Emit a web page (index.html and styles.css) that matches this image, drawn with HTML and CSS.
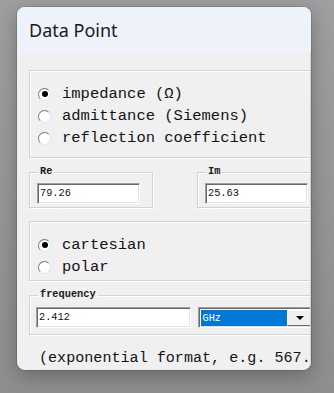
FILE: index.html
```html
<!DOCTYPE html>
<html>
<head>
<meta charset="utf-8">
<link rel="stylesheet" href="styles.css">
</head>
<body>
<div class="window">
  <div class="titlebar">Data Point</div>
  <div class="content">
    <div class="group group-type">
      <div class="radio-row"><span class="radio checked"></span><span>impedance (Ω)</span></div>
      <div class="radio-row"><span class="radio"></span><span>admittance (Siemens)</span></div>
      <div class="radio-row"><span class="radio"></span><span>reflection coefficient</span></div>
    </div>
    <div class="pair">
      <div class="group group-val">
        <span class="legend">Re</span>
        <div class="field">79.26</div>
      </div>
      <div class="group group-val group-im">
        <span class="legend">Im</span>
        <div class="field">25.63</div>
      </div>
    </div>
    <div class="group group-coord">
      <div class="radio-row"><span class="radio checked"></span><span>cartesian</span></div>
      <div class="radio-row"><span class="radio"></span><span>polar</span></div>
    </div>
    <div class="group group-freq">
      <span class="legend">frequency</span>
      <div class="freq-row">
        <div class="field field-freq">2.412</div>
        <div class="select">
          <span class="select-value">GHz</span>
          <span class="select-btn"><span class="arrow"></span></span>
        </div>
      </div>
    </div>
    <div class="hint">(exponential format, e.g. 567.</div>
  </div>
</div>
</body>
</html>
```

FILE: styles.css
```css
html, body {
  margin: 0;
  padding: 0;
}
body {
  width: 334px;
  height: 393px;
  overflow: hidden;
  background: linear-gradient(#9f9f9f, #8e8e8e);
  padding: 7px 0 0 17px;
  box-sizing: border-box;
}
.window {
  width: 294px;
  height: 363px;
  border-radius: 8px;
  overflow: hidden;
  background: #f0f0f0;
  box-shadow: 0 0 0 1px rgba(0,0,0,0.12), 0 6px 20px rgba(0,0,0,0.28);
  display: flex;
  flex-direction: column;
}
.titlebar {
  height: 45px;
  flex: none;
  background: #eef2fb;
  padding-left: 12px;
  display: flex;
  align-items: center;
  font-family: "Noto Sans", sans-serif;
  font-size: 18px;
  color: #1a1a1a;
}
.content {
  flex: 1;
  padding: 18px 0 0 12px;
  border-right: 1px solid #d2d2d2;
  overflow: hidden;
  font-family: "Liberation Mono", monospace;
  color: #141414;
}
.group {
  position: relative;
  box-sizing: border-box;
  border: 1px solid #d3d3d3;
  box-shadow: inset 1px 1px 0 #ffffff, 1px 1px 0 #ffffff;
}
.legend {
  position: absolute;
  left: 8px;
  top: -8px;
  padding: 0 2px;
  background: #f0f0f0;
  font-family: "Liberation Mono", monospace;
  font-size: 10.3px;
  font-weight: bold;
  line-height: 12px;
  color: #1a1a1a;
}
.group-type {
  width: 300px;
  height: 88px;
  padding: 12px 0 0 8px;
}
.radio-row {
  height: 22px;
  display: flex;
  align-items: center;
  font-size: 15.5px;
}
.radio {
  box-sizing: border-box;
  width: 13px;
  height: 13px;
  border-radius: 50%;
  border: 1px solid;
  border-color: #7a7a7a #e4e4e4 #e4e4e4 #7a7a7a;
  background: #ffffff;
  margin-right: 11px;
  display: flex;
  align-items: center;
  justify-content: center;
  flex: none;
}
.radio.checked::after {
  content: "";
  width: 6px;
  height: 6px;
  border-radius: 50%;
  background: #000;
}
.pair {
  display: flex;
  margin-top: 14px;
}
.group-val {
  width: 124px;
  height: 36px;
  flex: none;
  padding: 10px 0 0 7px;
}
.group-im {
  margin-left: 44px;
}
.field {
  box-sizing: border-box;
  width: 103px;
  height: 21px;
  background: #ffffff;
  border: 1px solid;
  border-color: #a0a0a0 #ffffff #ffffff #a0a0a0;
  box-shadow: inset 1px 1px 0 #696969, inset -1px -1px 0 #e3e3e3;
  font-size: 10.3px;
  line-height: 19px;
  padding-left: 2px;
  color: #111;
}
.group-coord {
  width: 300px;
  height: 60px;
  margin-top: 13px;
  padding: 12px 0 0 8px;
}
.group-freq {
  width: 300px;
  height: 40px;
  margin-top: 14px;
  padding: 11px 0 0 6px;
}
.freq-row {
  display: flex;
}
.field-freq {
  width: 156px;
}
.select {
  box-sizing: border-box;
  margin-left: 7px;
  width: 130px;
  height: 21px;
  display: flex;
  background: #ffffff;
  border: 1px solid;
  border-color: #a0a0a0 #ffffff #ffffff #a0a0a0;
  box-shadow: inset 1px 1px 0 #696969, inset -1px -1px 0 #e3e3e3;
  padding: 2px 0 1px 2px;
}
.select-value {
  width: 86px;
  background: #0078d7;
  color: #ffffff;
  font-size: 10.3px;
  line-height: 16px;
  padding-left: 1px;
  box-sizing: border-box;
}
.select-btn {
  width: 24px;
  background: #f0f0f0;
  border-top: 1px solid #ffffff;
  border-left: 1px solid #ffffff;
  border-bottom: 1px solid #696969;
  display: flex;
  align-items: center;
  justify-content: center;
  box-sizing: border-box;
}
.arrow {
  width: 0;
  height: 0;
  border-left: 4px solid transparent;
  border-right: 4px solid transparent;
  border-top: 4px solid #000;
}
.hint {
  margin-top: 12px;
  padding-left: 10px;
  font-size: 15.1px;
  line-height: 22px;
  white-space: nowrap;
}
```
